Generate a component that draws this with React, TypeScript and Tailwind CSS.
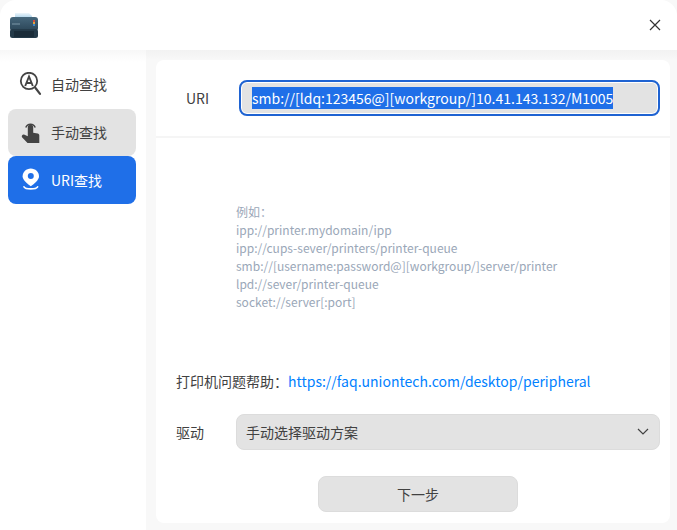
const font = { fontFamily: '"Noto Sans CJK SC", "Noto Sans", sans-serif' };

function PrinterLogo() {
  return (
    <svg width="28" height="26" viewBox="0 0 28 26">
      <defs>
        <linearGradient id="paper" x1="0" y1="0" x2="0" y2="1">
          <stop offset="0" stopColor="#eef6fb" />
          <stop offset="1" stopColor="#8fc3e3" />
        </linearGradient>
        <linearGradient id="body" x1="0" y1="0" x2="0" y2="1">
          <stop offset="0" stopColor="#46677c" />
          <stop offset="1" stopColor="#2b4557" />
        </linearGradient>
      </defs>
      <path d="M5 1h14l3 3v4H5z" fill="url(#paper)" />
      <rect x="0" y="5" width="28" height="14" rx="3" fill="url(#body)" />
      <rect x="0" y="17" width="28" height="9" rx="2.500" fill="#243a49" />
      <rect x="4" y="19" width="20" height="6" fill="#1a2c39" />
      <rect x="23" y="8" width="2" height="2" fill="#d2483f" />
      <rect x="23" y="10" width="2" height="2" fill="#e2a23b" />
      <rect x="23" y="12" width="2" height="2" fill="#3f86c9" />
      <rect x="2" y="11.500" width="8" height="1" fill="#7d97a7" />
    </svg>
  );
}

function AutoIcon() {
  return (
    <svg width="24" height="26" viewBox="0 -1 24 26" fill="none" stroke="#444">
      <circle cx="10" cy="8" r="8.200" strokeWidth="1.800" />
      <path d="M6.200 13 10 3.500 13.800 13M7.500 10h5" strokeWidth="1.900" />
      <path d="M16.500 15l4.500 5.800" strokeWidth="2.200" strokeLinecap="round" />
    </svg>
  );
}

function HandIcon() {
  return (
    <svg width="24" height="24" viewBox="0 0 24 24">
      <path d="M6.800 6.500a5 5 0 0 1 9.400 0" fill="none" stroke="#444" strokeWidth="1.500" />
      <path d="M8.800 6.500a2.700 2.700 0 0 1 5.400 0v5.300l4.500.8c1 .2 1.600 1 1.600 2V22H8.500L3 16.300c-.8-1.300.6-3.300 2.500-2.500l3.300 1.500z" fill="#444" />
    </svg>
  );
}

function PinIcon() {
  return (
    <svg width="24" height="24" viewBox="0 0 24 24">
      <path d="M11.800 .6C16.400 .6 20 4.200 20 8.400 20 11.700 15.200 15.700 11.800 18.200 8.400 15.700 3.600 11.700 3.600 8.400 3.600 4.200 7.200 .6 11.800 .6z" fill="#fff" />
      <circle cx="11.800" cy="8" r="3" fill="#1f6fe8" />
      <path d="M5 18.800c1.500 2.800 12 2.800 13.600 0" fill="none" stroke="#fff" strokeWidth="1.600" strokeLinecap="round" />
    </svg>
  );
}

function NavItem({ icon, label, className, labelClass }: { icon: React.ReactNode; label: string; className: string; labelClass: string }) {
  return (
    <div className={`flex items-center rounded-lg pl-[11px] text-sm ${className}`}>
      <span className="flex w-6 justify-center">{icon}</span>
      <span className={`ml-2 ${labelClass}`}>{label}</span>
    </div>
  );
}

export default function App() {
  return (
    <div className="flex h-[530px] w-[677px] flex-col overflow-hidden bg-[#f8f8f8] text-sm text-[#414141]" style={font}>
      <div className="flex h-[50px] shrink-0 items-center justify-between rounded-t-2xl bg-white pl-[10px] pr-[16px]">
        <PrinterLogo />
        <svg width="12" height="12" viewBox="0 0 12 12" stroke="#333" strokeWidth="1.200">
          <path d="M1 1l10 10M11 1 1 11" />
        </svg>
      </div>
      <div className="flex min-h-0 flex-1">
        <div className="w-[146px] shrink-0 bg-[linear-gradient(#f7f7f7,#ffffff_12px)] pl-2 pr-[10px] pt-[11px]">
          <NavItem icon={<AutoIcon />} label="自动查找" className="h-12" labelClass="pb-[2px]" />
          <NavItem icon={<HandIcon />} label="手动查找" className="h-[47px] bg-[#e3e3e3]" labelClass="pb-[2px]" />
          <NavItem icon={<PinIcon />} label="URI查找" className="h-12 bg-[#1f6fe8] text-white" labelClass="" />
        </div>
        <div className="min-w-0 flex-1 bg-[linear-gradient(#f2f2f2,#f8f8f8_10px)] pb-[7px] pl-[10px] pr-[7px] pt-[10px]">
          <div className="flex h-full flex-col rounded-lg bg-white">
            <div className="flex h-[78px] shrink-0 items-center border-b-2 border-[#f5f5f5] pl-[30px] pr-[10px]">
              <span className="w-[53px]">URI</span>
              <div className="flex h-9 flex-1 items-center rounded-lg border-2 border-[#1f63d2] bg-[#e3e3e3] pl-[11px] shadow-[inset_0_0_0_1px_#fff]">
                <span className="bg-[#1f6fe8] leading-[22px] text-white">smb://[ldq:123456@][workgroup/]10.41.143.132/M1005</span>
              </div>
            </div>
            <div className="ml-[80px] mt-[65px] text-xs leading-[18px] text-[#9aa7b8]">
              <p>例如：</p>
              <p>ipp://printer.mydomain/ipp</p>
              <p>ipp://cups-sever/printers/printer-queue</p>
              <p>smb://[username:password@][workgroup/]server/printer</p>
              <p>lpd://sever/printer-queue</p>
              <p>socket://server[:port]</p>
            </div>
            <div className="ml-5 mt-[60px] flex leading-5">
              <span>打印机问题帮助：</span>
              <span className="text-[#0081ff]">https://faq.uniontech.com/desktop/peripheral</span>
            </div>
            <div className="mt-[23px] flex items-center pl-5 pr-[10px]">
              <span className="w-[60px]">驱动</span>
              <div className="flex h-9 flex-1 items-center justify-between rounded-lg border border-[#dcdcdc] bg-[#e3e3e3] pl-[9px] pr-[10px]">
                <span>手动选择驱动方案</span>
                <svg width="12" height="8" viewBox="0 0 12 8" fill="none" stroke="#414141" strokeWidth="1.200">
                  <path d="M1 1l5 5 5-5" />
                </svg>
              </div>
            </div>
            <div className="mt-[26px] flex justify-center pl-5 pr-[10px]">
              <div className="flex h-9 w-[200px] items-center justify-center rounded-lg border border-[#dcdcdc] bg-[#e3e3e3]">下一步</div>
            </div>
          </div>
        </div>
      </div>
    </div>
  );
}
